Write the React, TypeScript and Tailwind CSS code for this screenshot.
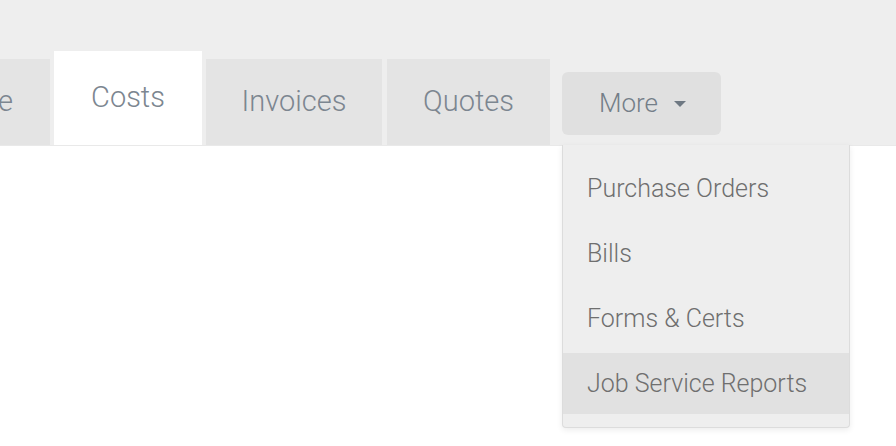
import React from "react";

const tabBase =
  "flex items-center justify-center h-[86px] bg-[#e4e4e4] text-[29px] text-[#7c8690] font-light";

export default function App() {
  return (
    <div className="w-[896px] h-[446px] bg-white overflow-hidden" style={{ fontFamily: "Roboto, 'Noto Sans', sans-serif" }}>
      <div className="relative h-[146px] bg-[#eeeeee] flex items-end border-b border-[#e9e9e9]">
        <div className="flex items-center justify-end h-[86px] w-[50px] overflow-hidden bg-[#e4e4e4] text-[29px] text-[#7c8690] font-light pr-[37px] whitespace-nowrap">
          e
        </div>
        <div className="ml-[4px] flex items-center justify-center h-[94px] w-[148px] bg-white text-[29px] text-[#7c8690] font-light">
          Costs
        </div>
        <div className={`${tabBase} ml-[4px] w-[176px]`}>Invoices</div>
        <div className={`${tabBase} ml-[5px] w-[163px]`}>Quotes</div>
        <div className="relative self-end mb-[10px] ml-[12px]">
          <div className="flex items-center h-[63px] w-[159px] rounded-[6px] bg-[#e0e0e0] pl-[37px] text-[26px] text-[#747e88] font-light">
            More
            <svg className="ml-[16px]" width="12" height="6" viewBox="0 0 12 6">
              <path d="M0 0 L12 0 L6 6 Z" fill="#6e7882" />
            </svg>
          </div>
          <div className="absolute left-0 top-[73px] w-[288px] bg-[#eeeeee] border border-t-0 border-[#dcdcdc] rounded-b-[4px] shadow-[0_2px_6px_rgba(0,0,0,0.08)] pt-[13px] pb-[13px] flex flex-col gap-[4px] z-10">
            {["Purchase Orders", "Bills", "Forms & Certs", "Job Service Reports"].map((t, i) => (
              <div
                key={t}
                className={`h-[61px] flex items-center pl-[24px] text-[25px] font-light text-[#6f6f6f] ${i === 3 ? "bg-[#e1e1e1]" : ""}`}
              >
                {t}
              </div>
            ))}
          </div>
        </div>
      </div>
    </div>
  );
}
